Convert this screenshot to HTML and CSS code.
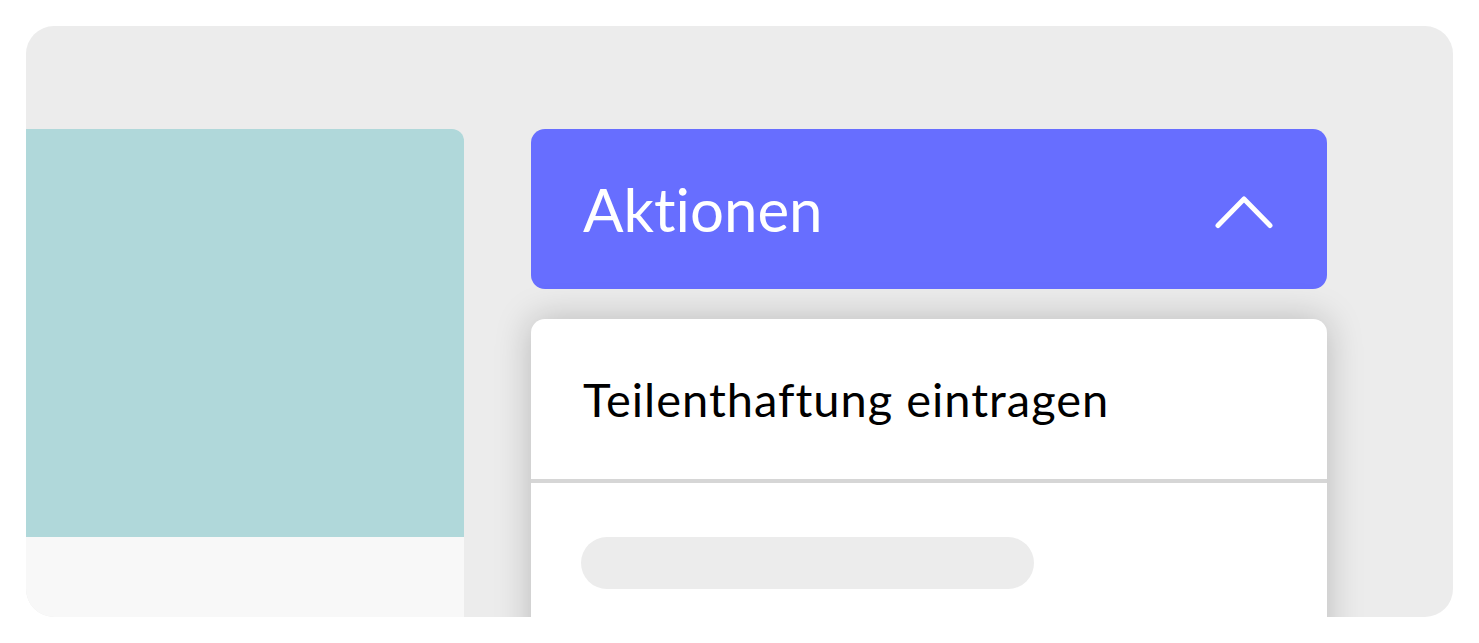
FILE: index.html
```html
<!DOCTYPE html>
<html lang="de">
<head>
<meta charset="utf-8">
<title>Aktionen</title>
<link rel="stylesheet" href="styles.css">
</head>
<body>
<div class="card">
  <div class="left-panel">
    <div class="left-media"></div>
    <div class="left-footer"></div>
  </div>
  <div class="right-col">
    <button class="actions-btn" type="button">
      <span class="actions-label">Aktionen</span>
      <svg class="chevron" width="58" height="34" viewBox="0 0 58 34" aria-hidden="true">
        <path d="M3 30.5 L29 4 L55 30.5" fill="none" stroke="#ffffff" stroke-width="5" stroke-linecap="round" stroke-linejoin="round"/>
      </svg>
    </button>
    <div class="menu">
      <div class="menu-item">Teilenthaftung eintragen</div>
      <div class="menu-divider"></div>
      <div class="menu-placeholder">
        <div class="pill"></div>
      </div>
    </div>
  </div>
</div>
</body>
</html>
```

FILE: styles.css
```css
* { box-sizing: border-box; }
html, body { margin: 0; padding: 0; background: #ffffff; }
body {
  padding: 26px 26px 0 26px;
  font-family: "Lato", "Noto Sans", sans-serif;
  font-variant-ligatures: none;
  font-feature-settings: "liga" 0, "clig" 0;
}
.card {
  width: 1427px;
  height: 591px;
  background: #ececec;
  border-radius: 28px;
  overflow: hidden;
  display: flex;
  align-items: flex-start;
  padding-top: 103px;
  gap: 67px;
}
.left-panel {
  width: 438px;
  height: 488px;
  display: flex;
  flex-direction: column;
  border-top-right-radius: 12px;
  overflow: hidden;
  flex: none;
}
.left-media {
  height: 408px;
  background: #b0d8da;
}
.left-footer {
  flex: 1;
  background: #f8f8f8;
}
.right-col {
  width: 796px;
  flex: none;
  display: flex;
  flex-direction: column;
  gap: 30px;
}
.actions-btn {
  height: 160px;
  border: none;
  border-radius: 14px;
  background: #676eff;
  color: #ffffff;
  display: flex;
  align-items: center;
  justify-content: space-between;
  padding: 0 54px 0 52px;
  font-family: inherit;
  font-variant-ligatures: none;
  cursor: pointer;
}
.actions-label {
  font-size: 60px;
  font-weight: 400;
  line-height: 1;
  letter-spacing: 0px;
}
.chevron { display: block; margin-top: 6px; }
.menu {
  background: #ffffff;
  border-radius: 14px 14px 0 0;
  height: 400px;
  box-shadow: 0 0 36px rgba(0, 0, 0, 0.22);
}
.menu-item {
  height: 160px;
  display: flex;
  align-items: center;
  padding: 0 52px;
  font-size: 47px;
  letter-spacing: 1px;
  color: #000000;
  line-height: 1;
}
.menu-divider {
  height: 4px;
  background: #d6d6d6;
}
.menu-placeholder {
  padding: 54px 50px 0 50px;
}
.pill {
  width: 453px;
  height: 52px;
  border-radius: 26px;
  background: #ececec;
}
```
